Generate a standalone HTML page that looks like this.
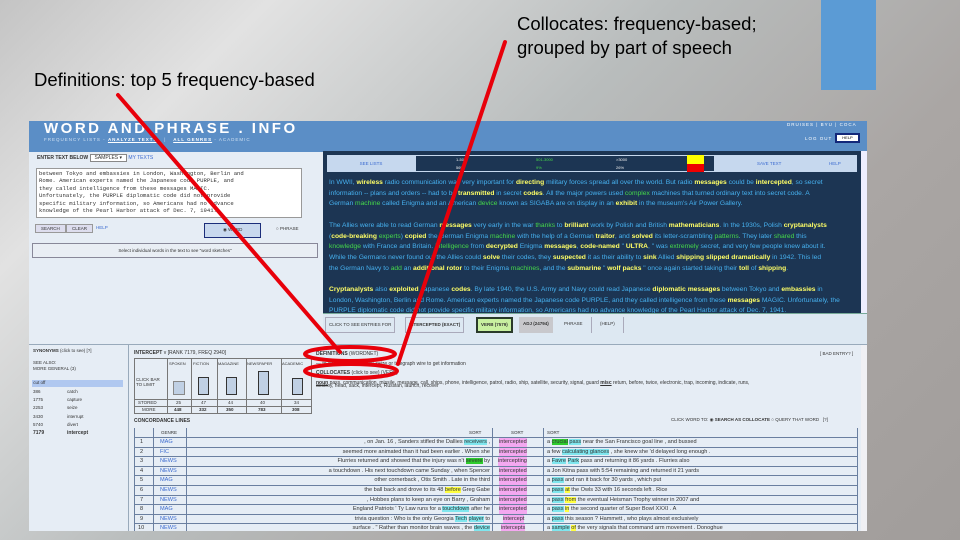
<!DOCTYPE html>
<html><head><meta charset="utf-8"><style>
*{margin:0;padding:0;box-sizing:border-box}
body{width:960px;height:540px;overflow:hidden;position:relative;font-family:"Liberation Sans",sans-serif;
background:linear-gradient(135deg,#c4c4c4 0%,#e2e2e2 18%,#b9bdbd 45%,#aaa6a4 70%,#a19d9b 100%)}
.a{position:absolute;white-space:nowrap}
.cap{font-size:18.5px;color:#000;line-height:24px}
.sc{left:29px;top:121px;width:838px;height:410px;background:#e6edf5;overflow:hidden}
.t{font-size:6px;color:#333}
.dk{font-size:6.7px;color:#46b0ee;line-height:10.7px}
.dk b{color:#ffff66}.dk i{font-style:normal;color:#45d84a}
.row{position:absolute;left:105px;width:724px;height:9.6px;border-top:1px solid #6a7fa0;font-size:5.6px;color:#333;line-height:9px}
.row span{position:absolute}
.row em{font-style:normal}
</style></head><body>
<div class="a cap" style="left:517px;top:12px">Collocates: frequency-based;<br>grouped by part of speech</div>
<div class="a cap" style="left:34px;top:68px">Definitions: top 5 frequency-based</div>
<div class="a" style="left:821px;top:0;width:55px;height:90px;background:#5b9bd5"></div>

<div class="a sc">
 <div class="a" style="left:0;top:0;width:838px;height:31px;background:#5b8ec6"></div>
 <div class="a" style="left:15px;top:-1px;font-size:15px;font-weight:bold;color:#fff;letter-spacing:2.5px">WORD AND PHRASE . INFO</div>
 <div class="a" style="left:15px;top:16px;font-size:4.5px;color:#cfe0f2;letter-spacing:1px">FREQUENCY LISTS - <u style="color:#fff;font-weight:bold">ANALYZE TEXTS</u> &nbsp; | &nbsp; <u style="color:#fff;font-weight:bold">ALL GENRES</u> - ACADEMIC</div>
 <div class="a" style="left:758px;top:1px;font-size:4.5px;color:#fff;letter-spacing:1px">DRUISES | BYU | COCA</div>
 <div class="a" style="left:776px;top:15px;font-size:4.5px;color:#fff;letter-spacing:1px">LOG OUT</div>
 <div class="a" style="left:806px;top:12px;width:25px;height:10px;background:#fff;border:2px solid #13287a;font-size:4px;text-align:center;line-height:6px">HELP</div>

 <div class="a t" style="left:8px;top:34px;font-weight:bold;font-size:5px">ENTER TEXT BELOW <span style="border:1px solid #888;background:#fff;font-weight:normal;padding:0 4px">SAMPLES ▾</span> <span style="color:#3c6bd0;font-weight:normal">MY TEXTS</span></div>
 <div class="a" style="left:7px;top:47px;width:266px;height:50px;background:#fff;border:1px solid #999;font-family:'Liberation Mono',monospace;font-size:5.6px;line-height:7.4px;color:#333;padding:1px 2px;overflow:hidden">between Tokyo and embassies in London, Washington, Berlin and<br>Rome. American experts named the Japanese code PURPLE, and<br>they called intelligence from these messages MAGIC.<br>Unfortunately, the PURPLE diplomatic code did not provide<br>specific military information, so Americans had no advance<br>knowledge of the Pearl Harbor attack of Dec. 7, 1941.</div>
 <div class="a t" style="left:6px;top:103px;border:1px solid #999;background:#dde;padding:1px 5px;font-size:4.5px">SEARCH</div>
 <div class="a t" style="left:37px;top:103px;border:1px solid #999;background:#dde;padding:1px 5px;font-size:4.5px">CLEAR</div>
 <div class="a t" style="left:67px;top:104px;color:#3c6bd0;font-size:4.5px">HELP</div>
 <div class="a" style="left:175px;top:102px;width:57px;height:15px;background:#c8d8ee;border:1px solid #1b2d7a;font-size:4.5px;color:#333;padding:3px 0 0 18px">◉ WORD</div>
 <div class="a t" style="left:247px;top:105px;font-size:4.5px">○ PHRASE</div>
 <div class="a" style="left:3px;top:122px;width:286px;height:15px;border:1px solid #889;background:#e9eef4;font-size:4.5px;color:#333;text-align:center;line-height:14px">Select individual words in the text to see "word sketches"</div>

 <div class="a" style="left:294px;top:30px;width:538px;height:183px;background:#1c3553"></div>
 <div class="a" style="left:832px;top:30px;width:6px;height:183px;background:#eef"></div>
 <div class="a" style="left:298px;top:34px;width:530px;height:17px;background:#c6d8ee"></div>
 <div class="a" style="left:298px;top:34px;width:88px;height:17px;font-size:4.5px;color:#3c6bd0;text-align:center;line-height:17px">SEE LISTS</div>
 <div class="a" style="left:386px;top:34px;width:300px;height:17px;background:#1c3553;border:1px solid #c6d8ee;font-size:4px;color:#eee;line-height:8px">
  <span class="a" style="left:40px">1-500</span><span class="a" style="left:120px;color:#45d84a">501-3000</span><span class="a" style="left:200px">&gt;3000</span>
  <span class="a" style="left:40px;top:8px">56%</span><span class="a" style="left:120px;top:8px;color:#45d84a">9%</span><span class="a" style="left:200px;top:8px">26%</span></div>
 <div class="a" style="left:658px;top:34px;width:17px;height:9px;background:#ffff00"></div>
 <div class="a" style="left:658px;top:43px;width:17px;height:8px;background:#e00"></div>
 <div class="a" style="left:728px;top:40px;font-size:4.5px;color:#3c6bd0">SAVE TEXT</div>
 <div class="a" style="left:800px;top:40px;font-size:4.5px;color:#3c6bd0">HELP</div>
 <div class="a dk" style="left:300px;top:57px">In WWII, <b>wireless</b> radio communication was very important for <b>directing</b> military forces spread all over the world. But radio <b>messages</b> could be <b>intercepted</b>, so secret<br>information -- plans and orders -- had to be <b>transmitted</b> in secret <b>codes</b>. All the major powers used <i>complex</i> machines that turned ordinary text into secret code. A<br>German <i>machine</i> called Enigma and an American <i>device</i> known as SIGABA are on display in an <b>exhibit</b> in the museum's Air Power Gallery.</div>
 <div class="a dk" style="left:300px;top:100px">The Allies were able to read German <b>messages</b> very early in the war <i>thanks</i> to <b>brilliant</b> work by Polish and British <b>mathematicians</b>. In the 1930s, Polish <b>cryptanalysts</b><br>(<b>code-breaking</b> <i>experts</i>) <b>copied</b> the German Enigma <i>machine</i> with the help of a German <b>traitor</b>, and <b>solved</b> its letter-scrambling <i>patterns</i>. They later <i>shared</i> this<br><i>knowledge</i> with France and Britain. <i>Intelligence</i> from <b>decrypted</b> Enigma <b>messages</b>, <b>code-named</b> " <b>ULTRA</b>, " was <i>extremely</i> secret, and very few people knew about it.<br>While the Germans never found out the Allies could <b>solve</b> their codes, they <b>suspected</b> it as their ability to <b>sink</b> Allied <b>shipping</b> <b>slipped</b> <b>dramatically</b> in 1942. This led<br>the German Navy to <i>add</i> an <b>additional</b> <b>rotor</b> to their Enigma <i>machines</i>, and the <b>submarine</b> " <b>wolf packs</b> " once again started taking their <b>toll</b> of <b>shipping</b>.</div>
 <div class="a dk" style="left:300px;top:164px"><b>Cryptanalysts</b> also <b>exploited</b> Japanese <b>codes</b>. By late 1940, the U.S. Army and Navy could read Japanese <b>diplomatic messages</b> between Tokyo and <b>embassies</b> in<br>London, Washington, Berlin and Rome. American experts named the Japanese code PURPLE, and they called intelligence from these <b>messages</b> MAGIC. Unfortunately, the<br>PURPLE diplomatic code did not provide specific military information, so Americans had no advance knowledge of the Pearl Harbor attack of Dec. 7, 1941.</div>

 <div class="a" style="left:294px;top:192px;width:544px;height:31px;background:#dde8f2;border-top:1px solid #7a9"></div>
 <div class="a t" style="left:296px;top:196px;height:16px;border:1px solid #aab;padding:4px 3px;font-size:4.5px">CLICK TO SEE ENTRIES FOR</div>
 <div class="a t" style="left:376px;top:196px;height:16px;border:1px solid #aab;padding:4px 3px;font-size:4.5px;font-weight:bold">INTERCEPTED (EXACT)</div>
 <div class="a t" style="left:447px;top:196px;height:16px;border:2px solid #2a3a2a;background:#c8f0a0;padding:3px 3px;font-size:4.5px;font-weight:bold">VERB (7579)</div>
 <div class="a t" style="left:490px;top:196px;height:16px;background:#c8c8cc;padding:4px 4px;font-size:4.5px;font-weight:bold">ADJ (24794)</div>
 <div class="a t" style="left:531px;top:196px;height:16px;padding:4px 4px;font-size:4.5px">PHRASE</div>
 <div class="a t" style="left:562px;top:196px;height:16px;border-left:1px solid #aab;border-right:1px solid #aab;padding:4px 8px;font-size:4.5px">(HELP)</div>
 <div class="a" style="left:0;top:223px;width:838px;height:1px;background:#9ab"></div>
 <div class="a" style="left:99px;top:223px;width:1px;height:187px;background:#9ab"></div>

 <div class="a t" style="left:4px;top:227px;font-size:4.5px;line-height:6px"><b>SYNONYMS</b> (click to see) [?]<br><br>SEE ALSO:<br>MORE GENERAL (3)</div>
 <div class="a" style="left:3px;top:259px;width:91px;height:7px;background:#b0c8f0;font-size:4.5px;color:#333">&nbsp;cut off</div>
 <div class="a t" style="left:4px;top:267px;font-size:4.5px;line-height:8.2px">386<br>1775<br>2253<br>3430<br>5740<br><b style="font-size:5px">7179</b></div>
 <div class="a t" style="left:38px;top:267px;font-size:4.5px;line-height:8.2px">catch<br>capture<br>seize<br>interrupt<br>divert<br><b style="font-size:5px">intercept</b></div>

 <div class="a t" style="left:105px;top:229px;font-size:5px"><b>INTERCEPT</b> v [RANK 7179, FREQ 2940]</div>
 <div class="a" style="left:105px;top:237px;width:178px;height:56px;border:1px solid #777;font-size:4.5px;color:#333">
  <div class="a" style="left:0;top:40px;width:176px;border-top:1px solid #777"></div>
  <div class="a" style="left:0;top:47px;width:176px;border-top:1px solid #777"></div>
  <div class="a" style="left:32px;top:0;width:1px;height:54px;background:#777"></div>
  <div class="a" style="left:56px;top:0;width:1px;height:54px;background:#777"></div>
  <div class="a" style="left:82px;top:0;width:1px;height:54px;background:#777"></div>
  <div class="a" style="left:111px;top:0;width:1px;height:54px;background:#777"></div>
  <div class="a" style="left:146px;top:0;width:1px;height:54px;background:#777"></div>
  <span class="a" style="left:1px;top:18px;line-height:5px">CLICK BAR<br>TO LIMIT</span>
  <span class="a" style="left:3px;top:41px">STORED</span><span class="a" style="left:7px;top:48px">MORE</span>
  <span class="a" style="left:34px;top:2px;font-size:4px">SPOKEN</span><span class="a" style="left:58px;top:2px;font-size:4px">FICTION</span><span class="a" style="left:83px;top:2px;font-size:4px">MAGAZINE</span><span class="a" style="left:112px;top:2px;font-size:4px">NEWSPAPER</span><span class="a" style="left:147px;top:2px;font-size:4px">ACADEMIC</span>
  <div class="a" style="left:38px;top:22px;width:12px;height:14px;background:#c0d0e4;border:1px solid #888"></div>
  <div class="a" style="left:63px;top:18px;width:11px;height:18px;background:#c0d0e4;border:1px solid #333"></div>
  <div class="a" style="left:91px;top:18px;width:11px;height:18px;background:#c0d0e4;border:1px solid #333"></div>
  <div class="a" style="left:123px;top:12px;width:11px;height:24px;background:#c0d0e4;border:1px solid #333"></div>
  <div class="a" style="left:157px;top:19px;width:11px;height:17px;background:#c0d0e4;border:1px solid #333"></div>
  <span class="a" style="left:41px;top:41px">25</span><span class="a" style="left:66px;top:41px">47</span><span class="a" style="left:93px;top:41px">44</span><span class="a" style="left:125px;top:41px">40</span><span class="a" style="left:159px;top:41px">34</span>
  <b class="a" style="left:39px;top:48px">448</b><b class="a" style="left:64px;top:48px">332</b><b class="a" style="left:91px;top:48px">350</b><b class="a" style="left:123px;top:48px">783</b><b class="a" style="left:157px;top:48px">308</b>
 </div>
 <div class="a t" style="left:287px;top:229px;font-size:5px;line-height:9.5px"><b>DEFINITIONS</b> (WORDNET)<br>— to intercept or interrupt; seize or telegraph wire to get information<br><b>COLLOCATES</b> (click to see) (VERB)<br><b><u>noun</u></b> pass, communication, missile, message, call, ships, phone, intelligence, patrol, radio, ship, satellite, security, signal, guard <b><u>misc</u></b> return, before, twice, electronic, trap, incoming, indicate, runs,</div>
 <div class="a t" style="left:287px;top:262px;font-size:5px">destroy, head, sack, intercept, Russian, launch, recover</div>
 <div class="a t" style="left:791px;top:230px;font-size:4.5px">[ BAD ENTRY? ]</div>
 <div class="a t" style="left:105px;top:297px;font-size:5px;font-weight:bold">CONCORDANCE LINES</div>
 <div class="a t" style="left:642px;top:296px;font-size:4.5px">CLICK WORD TO: ◉ <b>SEARCH AS COLLOCATE</b> ○ QUERY THAT WORD &nbsp; [?]</div>

 <div class="a" style="left:105px;top:307px;width:724px;height:103px;border-left:1px solid #6a7fa0;border-right:1px solid #6a7fa0"></div>
 <div class="a" style="left:124px;top:307px;width:1px;height:103px;background:#6a7fa0"></div>
 <div class="a" style="left:157px;top:307px;width:1px;height:103px;background:#6a7fa0"></div>
 <div class="a" style="left:463px;top:307px;width:1px;height:103px;background:#6a7fa0"></div>
 <div class="a" style="left:514px;top:307px;width:1px;height:103px;background:#6a7fa0"></div>
 <div class="a t" style="left:132px;top:309px;font-size:4.5px">GENRE</div>
 <div class="a t" style="left:440px;top:309px;font-size:4.5px">SORT</div>
 <div class="a t" style="left:482px;top:309px;font-size:4.5px">SORT</div>
 <div class="a t" style="left:518px;top:309px;font-size:4.5px">SORT</div>

 <div class="row" style="top:316px"><span style="left:6px">1</span><span style="left:26px;color:#3c6bd0">MAG</span><span style="right:368px">, on Jan. 16 , Sanders stifled the Dallies <em style="background:#7fe6ee">receivers</em> ,</span><span style="left:365px;background:#f4a8f0">intercepted</span><span style="left:413px">a <em style="background:#2ecc2e">crucial</em> <em style="background:#7fe6ee">pass</em> near the San Francisco goal line , and bussed</span></div>
 <div class="row" style="top:325.6px"><span style="left:6px">2</span><span style="left:26px;color:#3c6bd0">FIC</span><span style="right:368px">seemed more animated than it had been earlier . When she</span><span style="left:365px;background:#f4a8f0">intercepted</span><span style="left:413px">a few <em style="background:#7fe6ee">calculating glances</em> , she knew she 'd delayed long enough .</span></div>
 <div class="row" style="top:335.2px"><span style="left:6px">3</span><span style="left:26px;color:#3c6bd0">NEWS</span><span style="right:368px">Flurries returned and showed that the injury was n't <em style="background:#2ecc2e">severe</em> by</span><span style="left:364px;background:#f4a8f0">intercepting</span><span style="left:413px">a <em style="background:#7fe6ee">Favre</em> <em style="background:#7fe6ee">Park</em> pass and returning it 86 yards . Flurries also</span></div>
 <div class="row" style="top:344.8px"><span style="left:6px">4</span><span style="left:26px;color:#3c6bd0">NEWS</span><span style="right:368px">a touchdown . His next touchdown came Sunday , when Spencer</span><span style="left:365px;background:#f4a8f0">intercepted</span><span style="left:413px">a Jon Kitna pass with 5:54 remaining and returned it 21 yards</span></div>
 <div class="row" style="top:354.4px"><span style="left:6px">5</span><span style="left:26px;color:#3c6bd0">MAG</span><span style="right:368px">other cornerback , Otis Smith . Late in the third</span><span style="left:365px;background:#f4a8f0">intercepted</span><span style="left:413px">a <em style="background:#7fe6ee">pass</em> and ran it back for 30 yards , which put</span></div>
 <div class="row" style="top:364px"><span style="left:6px">6</span><span style="left:26px;color:#3c6bd0">NEWS</span><span style="right:368px">the ball back and drove to its 48 <em style="background:#ffff40">before</em> Greg Gabe</span><span style="left:365px;background:#f4a8f0">intercepted</span><span style="left:413px">a <em style="background:#7fe6ee">pass</em> <em style="background:#ffff40">at</em> the Owls 33 with 16 seconds left . Rice</span></div>
 <div class="row" style="top:373.6px"><span style="left:6px">7</span><span style="left:26px;color:#3c6bd0">NEWS</span><span style="right:368px">, Hobbes plans to keep an eye on Barry , Graham</span><span style="left:365px;background:#f4a8f0">intercepted</span><span style="left:413px">a <em style="background:#7fe6ee">pass</em> <em style="background:#ffff40">from</em> the eventual Heisman Trophy winner in 2007 and</span></div>
 <div class="row" style="top:383.2px"><span style="left:6px">8</span><span style="left:26px;color:#3c6bd0">MAG</span><span style="right:368px">England Patriots ' Ty Law runs for a <em style="background:#7fe6ee">touchdown</em> after he</span><span style="left:365px;background:#f4a8f0">intercepted</span><span style="left:413px">a <em style="background:#7fe6ee">pass</em> <em style="background:#ffff40">in</em> the second quarter of Super Bowl XXXI . A</span></div>
 <div class="row" style="top:392.8px"><span style="left:6px">9</span><span style="left:26px;color:#3c6bd0">NEWS</span><span style="right:368px">trivia question : Who is the only Georgia <em style="background:#7fe6ee">Tech</em> <em style="background:#7fe6ee">player</em> to</span><span style="left:369px;background:#f4a8f0">intercept</span><span style="left:413px">a <em style="background:#7fe6ee">pass</em> this season ? Hammett , who plays almost exclusively</span></div>
 <div class="row" style="top:402.4px"><span style="left:4px">10</span><span style="left:26px;color:#3c6bd0">NEWS</span><span style="right:368px">surface . " Rather than monitor brain waves , the <em style="background:#7fe6ee">device</em></span><span style="left:367px;background:#f4a8f0">intercepts</span><span style="left:413px">a <em style="background:#7fe6ee">sample</em> <em style="background:#ffff40">of</em> the very signals that command arm movement . Donoghue</span></div>
 <div class="a" style="left:832px;top:224px;width:6px;height:186px;background:#f0f0f4"></div>
</div>

<svg class="a" style="left:0;top:0" width="960" height="540">
 <g stroke="#e8000a" stroke-width="4" fill="none" stroke-linecap="round">
  <line x1="118" y1="95" x2="340" y2="352"/>
  <line x1="505" y1="42" x2="398" y2="364"/>
  <ellipse cx="350" cy="354" rx="45" ry="7"/>
  <ellipse cx="351" cy="371" rx="46" ry="7"/>
 </g>
</svg>
</body></html>
